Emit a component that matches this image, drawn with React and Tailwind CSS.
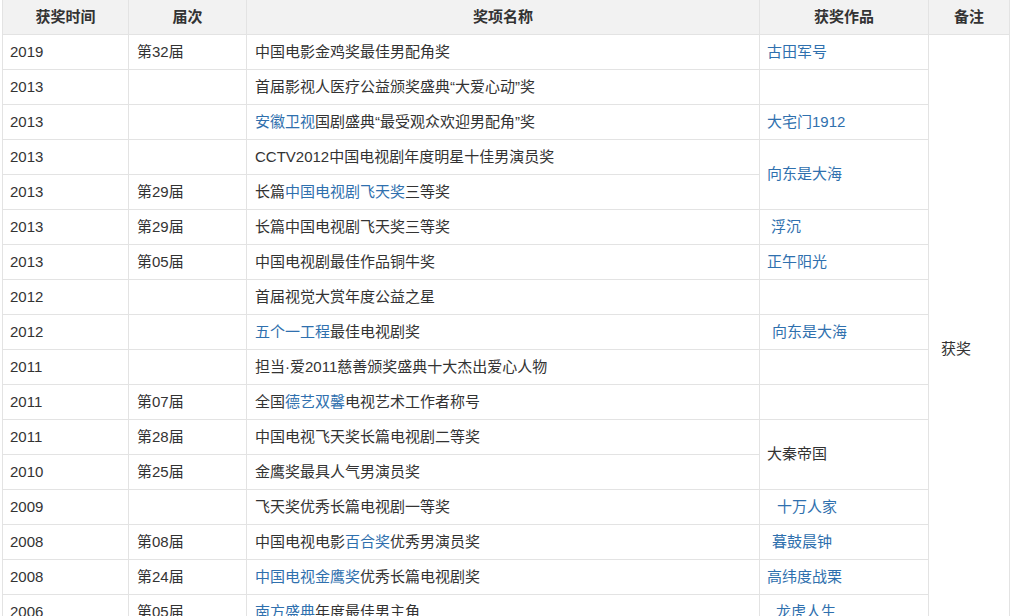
const A = ({ children }) => <span className="text-[#2f70ae]">{children}</span>;

const ROWS = [
  { year: '2019', session: '第32届', name: '中国电影金鸡奖最佳男配角奖', work: <A>古田军号</A> },
  { year: '2013', session: '', name: '首届影视人医疗公益颁奖盛典“大爱心动”奖', work: null },
  { year: '2013', session: '', name: <><A>安徽卫视</A>国剧盛典“最受观众欢迎男配角”奖</>, work: <A>大宅门1912</A> },
  { year: '2013', session: '', name: 'CCTV2012中国电视剧年度明星十佳男演员奖', work: <A>向东是大海</A>, span: 2 },
  { year: '2013', session: '第29届', name: <>长篇<A>中国电视剧飞天奖</A>三等奖</>, skip: true },
  { year: '2013', session: '第29届', name: '长篇中国电视剧飞天奖三等奖', work: <span className="ml-[4px]"><A>浮沉</A></span> },
  { year: '2013', session: '第05届', name: '中国电视剧最佳作品铜牛奖', work: <A>正午阳光</A> },
  { year: '2012', session: '', name: '首届视觉大赏年度公益之星', work: null },
  { year: '2012', session: '', name: <><A>五个一工程</A>最佳电视剧奖</>, work: <span className="ml-[5px]"><A>向东是大海</A></span> },
  { year: '2011', session: '', name: '担当·爱2011慈善颁奖盛典十大杰出爱心人物', work: null },
  { year: '2011', session: '第07届', name: <>全国<A>德艺双馨</A>电视艺术工作者称号</>, work: null },
  { year: '2011', session: '第28届', name: '中国电视飞天奖长篇电视剧二等奖', work: '大秦帝国', span: 2 },
  { year: '2010', session: '第25届', name: '金鹰奖最具人气男演员奖', skip: true },
  { year: '2009', session: '', name: '飞天奖优秀长篇电视剧一等奖', work: <span className="ml-[10px]"><A>十万人家</A></span> },
  { year: '2008', session: '第08届', name: <>中国电视电影<A>百合奖</A>优秀男演员奖</>, work: <span className="ml-[5px]"><A>暮鼓晨钟</A></span> },
  { year: '2008', session: '第24届', name: <><A>中国电视金鹰奖</A>优秀长篇电视剧奖</>, work: <A>高纬度战栗</A> },
  { year: '2006', session: '第05届', name: <><A>南方盛典</A>年度最佳男主角</>, work: <span className="ml-[9px]"><A>龙虎人生</A></span> },
  { year: '2005', session: '', name: '中国电视剧飞天奖优秀男演员奖', work: null },
];

const cell = 'border border-[#e3e3e3] px-[7px] h-[35px] align-middle';

export default function App() {
  return (
    <div className="bg-white min-h-screen pl-[2px] text-[15px] text-[#333] font-['Liberation_Sans','Noto_Sans_CJK_SC',sans-serif]">
      <table className="table-fixed border-collapse w-[1007px] -mt-px">
        <colgroup>
          <col className="w-[126px]" />
          <col className="w-[118px]" />
          <col className="w-[513px]" />
          <col className="w-[169px]" />
          <col className="w-[81px]" />
        </colgroup>
        <thead>
          <tr className="bg-[#f2f2f2] font-bold">
            {['获奖时间', '届次', '奖项名称', '获奖作品', '备注'].map((h) => (
              <th key={h} className="border border-[#e3e3e3] h-[35px] text-center align-middle font-bold">{h}</th>
            ))}
          </tr>
        </thead>
        <tbody>
          {ROWS.map((r, i) => (
            <tr key={i}>
              <td className={cell}>{r.year}</td>
              <td className={cell + ' pl-[8px]'}>{r.session}</td>
              <td className={cell + ' pl-[8px] whitespace-nowrap'}>{r.name}</td>
              {!r.skip && (
                <td className={cell} rowSpan={r.span || 1}>{r.work}</td>
              )}
              {i === 0 && (
                <td className={cell + ' pl-[12px]'} rowSpan={ROWS.length}>获奖</td>
              )}
            </tr>
          ))}
        </tbody>
      </table>
    </div>
  );
}
